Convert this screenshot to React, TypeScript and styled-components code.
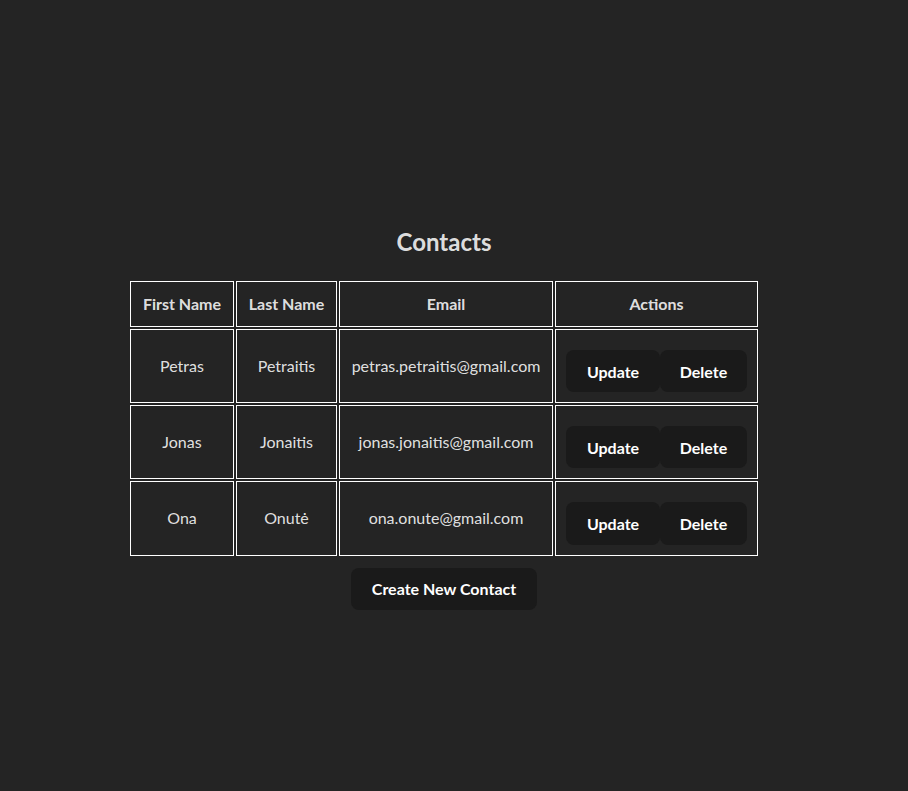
import React from 'react';
import styled, { createGlobalStyle } from 'styled-components';

const GlobalStyle = createGlobalStyle`
  * {
    box-sizing: border-box;
  }

  body {
    margin: 0;
    background: #242424;
    color: rgba(255, 255, 255, 0.87);
    font-family: "Lato", "Open Sans", "Liberation Sans", sans-serif;
    font-size: 16px;
    line-height: 1.5;
  }
`;

type Contact = {
  id: number;
  firstName: string;
  lastName: string;
  email: string;
};

const contacts: Contact[] = [
  { id: 1, firstName: 'Petras', lastName: 'Petraitis', email: 'petras.petraitis@gmail.com' },
  { id: 2, firstName: 'Jonas', lastName: 'Jonaitis', email: 'jonas.jonaitis@gmail.com' },
  { id: 3, firstName: 'Ona', lastName: 'Onutė', email: 'ona.onute@gmail.com' },
];

const columns = [
  { label: 'First Name', width: 104 },
  { label: 'Last Name', width: 101 },
  { label: 'Email', width: 214 },
  { label: 'Actions', width: 203 },
];

function App() {
  return (
    <>
      <GlobalStyle />
      <Page>
        <Title>Contacts</Title>
        <Table>
          <thead>
            <tr>
              {columns.map((c) => (
                <HeadCell key={c.label} $width={c.width}>
                  {c.label}
                </HeadCell>
              ))}
            </tr>
          </thead>
          <tbody>
            {contacts.map((c) => (
              <tr key={c.id}>
                <Cell>{c.firstName}</Cell>
                <Cell>{c.lastName}</Cell>
                <Cell>{c.email}</Cell>
                <Cell>
                  <Actions>
                    <Button $width={94}>Update</Button>
                    <Button $width={87}>Delete</Button>
                  </Actions>
                </Cell>
              </tr>
            ))}
          </tbody>
        </Table>
        <CreateButton $width={186}>Create New Contact</CreateButton>
      </Page>
    </>
  );
}

export default App;

const Page = styled.div`
  display: flex;
  flex-direction: column;
  align-items: center;
  min-height: 791px;
  padding: 224px 20px 0 0;
`;

const Title = styled.h2`
  margin: 0 0 19px;
  font-size: 24px;
  line-height: 36px;
  font-weight: 700;
`;

const Table = styled.table`
  table-layout: fixed;
  border-collapse: separate;
  border-spacing: 2px;
  width: 632px;
`;

const HeadCell = styled.th<{ $width: number }>`
  width: ${(p) => p.$width}px;
  border: 1px solid #fff;
  padding: 10px;
  font-size: 16px;
  font-weight: 700;
  line-height: 24px;
  text-align: center;
  white-space: nowrap;
`;

const Cell = styled.td`
  border: 1px solid #fff;
  padding: 10px;
  font-size: 16px;
  line-height: 24px;
  text-align: center;
  vertical-align: middle;
  white-space: nowrap;
`;

const Actions = styled.div`
  display: flex;
  justify-content: center;
  padding-top: 10px;
`;

const Button = styled.button<{ $width?: number }>`
  width: ${(p) => (p.$width ? `${p.$width}px` : 'auto')};
  border-radius: 8px;
  border: 1px solid transparent;
  padding: 9.6px 0;
  font-family: inherit;
  font-size: 16px;
  font-weight: 700;
  line-height: 21px;
  color: #fff;
  background: #1a1a1a;
  cursor: pointer;
`;

const CreateButton = styled(Button)`
  margin-top: 10px;
`;
